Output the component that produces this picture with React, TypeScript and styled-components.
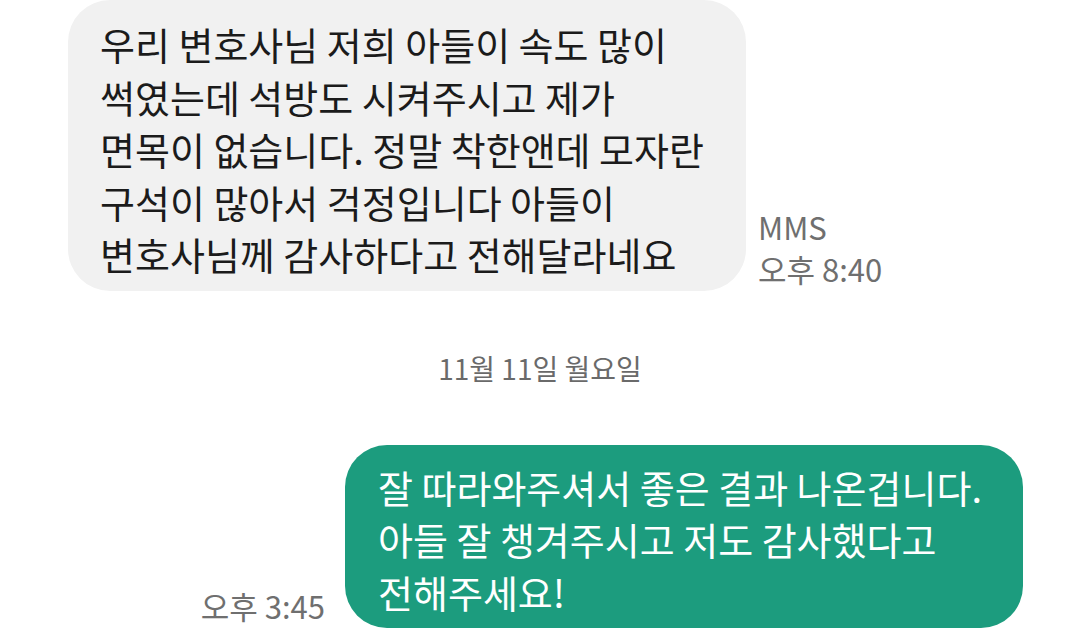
import React from 'react';
import styled, { createGlobalStyle } from 'styled-components';

const GlobalStyle = createGlobalStyle`
  html, body {
    margin: 0;
    padding: 0;
    background: #ffffff;
  }
  body {
    font-family: "Noto Sans CJK KR", "Noto Sans", sans-serif;
    -webkit-font-smoothing: antialiased;
  }
`;

const Screen = styled.div`
  width: 1080px;
  height: 634px;
  overflow: hidden;
  background: #ffffff;
  display: flex;
  flex-direction: column;
`;

const Row = styled.div<{ $mine?: boolean }>`
  display: flex;
  align-items: flex-end;
  justify-content: ${(p) => (p.$mine ? 'flex-end' : 'flex-start')};
  gap: ${(p) => (p.$mine ? '20px' : '12px')};
  padding: ${(p) => (p.$mine ? '0 57px 0 0' : '0 0 0 68px')};
`;

const Bubble = styled.div<{ $mine?: boolean }>`
  width: 678px;
  box-sizing: border-box;
  padding: ${(p) => (p.$mine ? '16px 20px 10px 33px' : '18px 20px 10px 32px')};
  border-radius: 42px;
  background: ${(p) => (p.$mine ? '#1c9c7e' : '#f1f1f1')};
  color: ${(p) => (p.$mine ? '#ffffff' : '#1b1b1b')};
  font-size: 38px;
  line-height: 52.5px;
`;

const Line = styled.div`
  white-space: nowrap;
`;

const Meta = styled.div<{ $mine?: boolean }>`
  display: flex;
  flex-direction: column;
  align-items: ${(p) => (p.$mine ? 'flex-end' : 'flex-start')};
  color: #6f6f6f;
  font-size: 31px;
  line-height: 42px;
  padding-bottom: 1px;
`;

const DateLabel = styled.div`
  text-align: center;
  color: #6a6a6a;
  font-size: 28px;
  line-height: 40px;
  margin: 57px 0 57px;
`;

const received = [
  '우리 변호사님 저희 아들이 속도 많이',
  '썩였는데 석방도 시켜주시고 제가',
  '면목이 없습니다. 정말 착한앤데 모자란',
  '구석이 많아서 걱정입니다 아들이',
  '변호사님께 감사하다고 전해달라네요',
];

const sent = [
  '잘 따라와주셔서 좋은 결과 나온겁니다.',
  '아들 잘 챙겨주시고 저도 감사했다고',
  '전해주세요!',
];

export default function App() {
  return (
    <Screen>
      <GlobalStyle />
      <Row>
        <Bubble>
          {received.map((t) => (
            <Line key={t}>{t}</Line>
          ))}
        </Bubble>
        <Meta>
          <span>MMS</span>
          <span>오후 8:40</span>
        </Meta>
      </Row>
      <DateLabel>11월 11일 월요일</DateLabel>
      <Row $mine>
        <Meta $mine>
          <span>오후 3:45</span>
        </Meta>
        <Bubble $mine>
          {sent.map((t) => (
            <Line key={t}>{t}</Line>
          ))}
        </Bubble>
      </Row>
    </Screen>
  );
}
